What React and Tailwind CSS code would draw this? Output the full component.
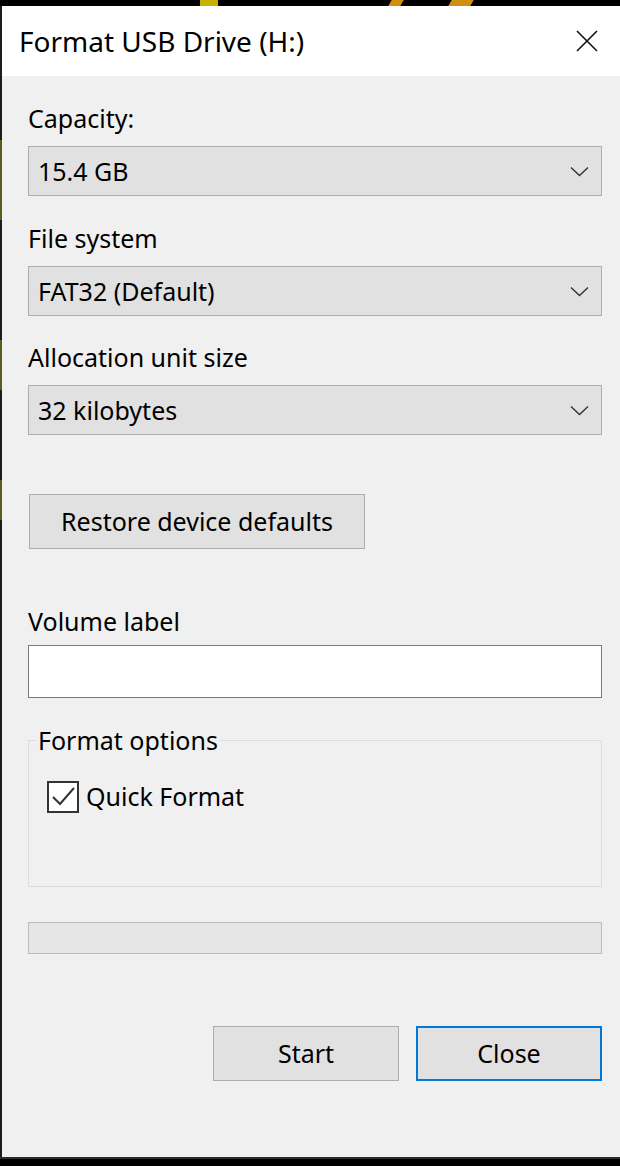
import React from "react";

const font = { fontFamily: '"Noto Sans", "Open Sans", sans-serif' };

function Chevron() {
  return (
    <svg width="19" height="11" viewBox="0 0 19 11" className="shrink-0">
      <polyline points="1,1.5 9.5,9.5 18,1.5" fill="none" stroke="#333" strokeWidth="1.4" />
    </svg>
  );
}

function Dropdown({ value }) {
  return (
    <div className="h-[50px] bg-[#e1e1e1] border border-[#adadad] flex items-center justify-between pl-[9px] pr-[12px]">
      <span className="text-[25px] leading-none text-black">{value}</span>
      <Chevron />
    </div>
  );
}

function Label({ children, className = "" }) {
  return <div className={"text-[25px] leading-[32px] text-black " + className}>{children}</div>;
}

export default function App() {
  return (
    <div className="w-[620px] h-[1166px] bg-black flex flex-col overflow-hidden" style={font}>
      {/* desktop strip above the dialog */}
      <div className="h-[6px] shrink-0 relative bg-black">
        <div className="absolute left-[200px] top-0 w-[18px] h-[6px] bg-[#c8b200]" />
        <div className="absolute left-[390px] top-0 w-[12px] h-[6px] bg-[#d18f12] skew-x-[-30deg]" />
        <div className="absolute left-[450px] top-0 w-[22px] h-[6px] bg-[#d18f12] skew-x-[-30deg]" />
      </div>

      <div className="flex flex-1 min-h-0">
        {/* left edge of the desktop behind */}
        <div className="w-[2px] shrink-0 flex flex-col bg-[#1c1c1c]">
          <div className="h-[134px]" />
          <div className="h-[80px] bg-[#5e5c1c]" />
          <div className="h-[120px]" />
          <div className="h-[50px] bg-[#5e5c1c]" />
          <div className="h-[90px]" />
          <div className="h-[40px] bg-[#5e5c1c]" />
        </div>

        {/* dialog window */}
        <div className="flex-1 flex flex-col bg-[#f0f0f0]">
          <div className="h-[70px] bg-white flex items-center justify-between pl-[17px] pr-[21px] shrink-0">
            <span className="text-[28px] text-black leading-none">Format USB Drive (H:)</span>
            <svg width="24" height="24" viewBox="0 0 24 24">
              <path d="M2 2 L22 22 M22 2 L2 22" stroke="#111" strokeWidth="1.6" fill="none" />
            </svg>
          </div>

          <div className="flex-1 flex flex-col pl-[26px] pr-[18px]">
            <Label className="mt-[26px]">Capacity:</Label>
            <div className="mt-[12px]">
              <Dropdown value="15.4 GB" />
            </div>

            <Label className="mt-[26px]">File system</Label>
            <div className="mt-[12px]">
              <Dropdown value="FAT32 (Default)" />
            </div>

            <Label className="mt-[25px]">Allocation unit size</Label>
            <div className="mt-[12px]">
              <Dropdown value="32 kilobytes" />
            </div>

            <div className="mt-[59px] ml-[1px] w-[336px] h-[55px] bg-[#e1e1e1] border border-[#adadad] flex items-center justify-center text-[25px] text-black">
              Restore device defaults
            </div>

            <Label className="mt-[56px]">Volume label</Label>
            <div className="mt-[8px] h-[53px] bg-white border border-[#7a7a7a]" />

            <fieldset className="mt-[26px] h-[163px] border border-[#dcdcdc] p-0 m-0">
              <legend className="ml-[7px] px-[2px] text-[25px] leading-[32px] text-black">Format options</legend>
              <div className="flex items-center mt-[22px] ml-[18px]">
                <div className="w-[32px] h-[32px] border-2 border-[#333] bg-white flex items-center justify-center shrink-0">
                  <svg width="28" height="28" viewBox="0 0 28 28">
                    <polyline points="4,14 11,21 25,5" fill="none" stroke="#333" strokeWidth="2" />
                  </svg>
                </div>
                <span className="ml-[7px] text-[25px] text-black">Quick Format</span>
              </div>
            </fieldset>

            <div className="mt-[35px] h-[32px] bg-[#e6e6e6] border border-[#bcbcbc]" />

            <div className="mt-[72px] flex justify-end gap-[17px]">
              <div className="w-[186px] h-[55px] bg-[#e1e1e1] border border-[#adadad] flex items-center justify-center text-[25px] text-black">
                Start
              </div>
              <div className="w-[186px] h-[55px] bg-[#e1e1e1] border-2 border-[#0078d7] flex items-center justify-center text-[25px] text-black">
                Close
              </div>
            </div>
          </div>
        </div>
      </div>

      {/* taskbar edge below */}
      <div className="h-[9px] shrink-0 flex flex-col">
        <div className="h-[2px] bg-[#2a2a2a]" />
        <div className="flex-1 bg-black" />
      </div>
    </div>
  );
}
